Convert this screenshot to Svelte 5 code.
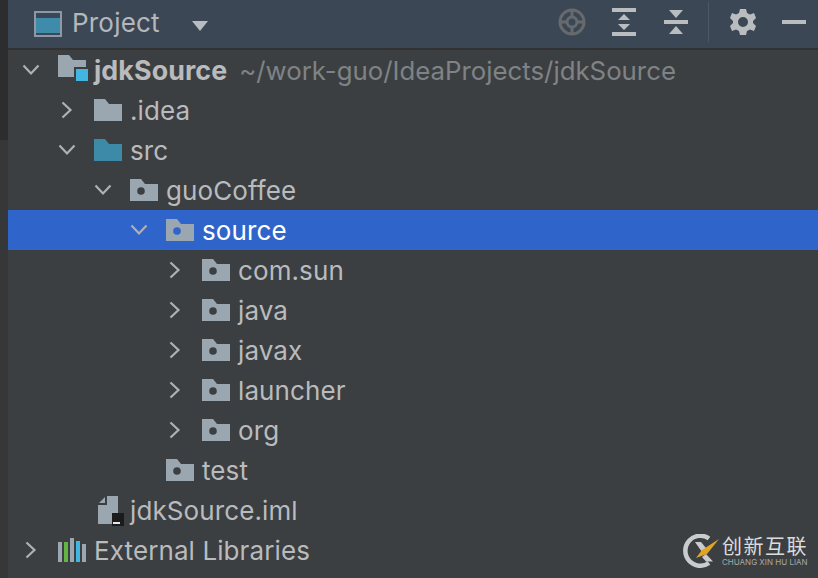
<script>
  const rows = [
    { depth: 0, arrow: 'down', icon: 'project', name: 'jdkSource', bold: true, hint: '~/work-guo/IdeaProjects/jdkSource' },
    { depth: 1, arrow: 'right', icon: 'folder', name: '.idea' },
    { depth: 1, arrow: 'down', icon: 'src', name: 'src' },
    { depth: 2, arrow: 'down', icon: 'pkg', name: 'guoCoffee' },
    { depth: 3, arrow: 'down', icon: 'pkg', name: 'source', selected: true },
    { depth: 4, arrow: 'right', icon: 'pkg', name: 'com.sun' },
    { depth: 4, arrow: 'right', icon: 'pkg', name: 'java' },
    { depth: 4, arrow: 'right', icon: 'pkg', name: 'javax' },
    { depth: 4, arrow: 'right', icon: 'pkg', name: 'launcher' },
    { depth: 4, arrow: 'right', icon: 'pkg', name: 'org' },
    { depth: 3, icon: 'pkg', name: 'test' },
    { depth: 1, icon: 'iml', name: 'jdkSource.iml' },
    { depth: 0, arrow: 'right', icon: 'libs', name: 'External Libraries' }
  ];
  const folderPath = 'M0 0H11L15 5H28V22H0Z';
</script>

<div class="window">
  <div class="gutter"></div>
  <div class="panel">
    <header class="toolbar">
      <svg class="tool-window" width="28" height="26" viewBox="0 0 28 26">
        <rect x="0" y="0" width="28" height="26" fill="#8d9aa5" />
        <rect x="2" y="2" width="24" height="22" fill="#3c4756" />
        <rect x="2" y="7" width="24" height="15" fill="#3f8bab" />
      </svg>
      <span class="title">Project</span>
      <svg class="caret" width="16" height="10" viewBox="0 0 16 10"><path d="M0 0H16L8 10Z" fill="#b6bcc2" /></svg>
      <div class="actions">
        <svg class="locate" width="28" height="28" viewBox="0 0 28 28" fill="none" stroke="#666a6c" stroke-width="3">
          <circle cx="14" cy="14" r="12" />
          <circle cx="14" cy="14" r="5" />
          <path d="M14 1V9M14 19V27M1 14H9M19 14H27" />
        </svg>
        <svg class="expand" width="24" height="28" viewBox="0 0 24 28" fill="#b9bdc0">
          <rect y="0" width="24" height="4" />
          <rect y="24" width="24" height="4" />
          <path d="M12 6L18 12H6ZM12 22L6 16H18Z" />
        </svg>
        <svg class="collapse" width="24" height="26" viewBox="0 0 24 26" fill="#b9bdc0">
          <rect y="11" width="24" height="4" />
          <path d="M5 1H19L12 9ZM12 17L19 25H5Z" />
        </svg>
        <span class="divider"></span>
        <svg class="gear" width="26" height="28" viewBox="0 0 26 28">
          <path fill="#b9bdc0" fill-rule="evenodd" d="M10 1H16L17 5L20 6.500L24 5L26 10L23 13V15L26 18L24 23L20 21.500L17 23L16 27H10L9 23L6 21.500L2 23L0 18L3 15V13L0 10L2 5L6 6.500L9 5ZM13 9A5 5 0 1 0 13 19A5 5 0 1 0 13 9Z" />
        </svg>
        <span class="minimize"></span>
      </div>
    </header>

    <div class="tree">
      {#each rows as row}
        <div class="row" class:selected={row.selected} style="padding-left: {14 + row.depth * 36}px">
          <span class="arrow" class:closed={row.arrow === 'right'}>
            {#if row.arrow === 'down'}
              <svg width="18" height="12" viewBox="0 0 18 12" fill="none" stroke="#afb1b3" stroke-width="2.200"><path d="M1.500 1.500L9 9.500L16.500 1.500" /></svg>
            {:else if row.arrow === 'right'}
              <svg width="12" height="18" viewBox="0 0 12 18" fill="none" stroke="#afb1b3" stroke-width="2.200"><path d="M1.500 1.500L9.500 9L1.500 16.500" /></svg>
            {/if}
          </span>
          <span class="icon">
            {#if row.icon === 'project'}
              <svg width="30" height="30" viewBox="0 0 30 30">
                <path d={folderPath} fill="#9aa7b0" />
                <rect x="16" y="12" width="15" height="15" fill="#3c3f41" />
                <rect x="18" y="14" width="12" height="12" fill="#40b6e0" />
              </svg>
            {:else if row.icon === 'folder' || row.icon === 'src'}
              <svg width="28" height="22" viewBox="0 0 28 22"><path d={folderPath} fill={row.icon === 'src' ? '#3d8aa8' : '#9aa7b0'} /></svg>
            {:else if row.icon === 'pkg'}
              <svg width="28" height="22" viewBox="0 0 28 22">
                <path d={folderPath} fill="#9aa7b0" />
                <circle cx="11" cy="12" r="3.800" fill={row.selected ? '#2f65ca' : '#3c3f41'} />
              </svg>
            {:else if row.icon === 'iml'}
              <svg class="iml" width="26" height="30" viewBox="0 0 26 30">
                <path d="M9 0H20V28H0V9H9Z" fill="#9aa7b0" />
                <path d="M7 1V7H1Z" fill="#9aa7b0" />
                <rect x="14" y="17" width="12" height="13" fill="#1b1b1b" />
                <rect x="15" y="26" width="7" height="2" fill="#e8e8e8" />
              </svg>
            {:else if row.icon === 'libs'}
              <svg width="28" height="24" viewBox="0 0 28 24">
                <rect x="0" y="4" width="4" height="20" fill="#9aa7b0" />
                <rect x="6" y="4" width="4" height="20" fill="#62b543" />
                <rect x="12" y="0" width="4" height="24" fill="#9aa7b0" />
                <rect x="18" y="3" width="4" height="21" fill="#40b6e0" />
                <rect x="24" y="6" width="4" height="18" fill="#9aa7b0" />
              </svg>
            {/if}
          </span>
          <span class="name" class:bold={row.bold}>{row.name}</span>
          {#if row.hint}<span class="hint">{row.hint}</span>{/if}
        </div>
      {/each}
      <div class="row" style="padding-left: 50px"><span class="next-icon"></span></div>
    </div>
  </div>

  <div class="watermark">
    <svg width="38" height="34" viewBox="0 0 38 34">
      <path d="M26 4.500A15 15 0 1 0 26 29" fill="none" stroke="#c9cbcc" stroke-width="4.500" />
      <path d="M12 8H18L23 14L19 18Z" fill="#c9cbcc" />
      <path d="M23 20L30 27.500H23L19 23Z" fill="#c9cbcc" />
      <path d="M36 5L24 20L13 24L19 16Z" fill="#e0a526" />
    </svg>
    <div class="mark-text">
      <span class="mark-cn">创新互联</span>
      <span class="mark-en">CHUANG XIN HU LIAN</span>
    </div>
  </div>
</div>

<style>
  :global(body) {
    margin: 0;
    background: #3c3f41;
  }

  .window {
    position: relative;
    display: flex;
    width: 818px;
    height: 578px;
    overflow: hidden;
    font-family: Inter, "Noto Sans", sans-serif;
  }

  .gutter {
    width: 8px;
    flex-shrink: 0;
    background: linear-gradient(to bottom, #2c2d2e 0, #2c2d2e 140px, #353738 140px);
  }

  .panel {
    flex: 1;
    min-width: 0;
    display: flex;
    flex-direction: column;
    background: #3c3f41;
  }

  .toolbar {
    display: flex;
    align-items: center;
    height: 48px;
    flex-shrink: 0;
    padding-left: 26px;
    background: #3c4756;
    border-bottom: 2px solid #323232;
  }

  .tool-window {
    margin-right: 10px;
  }

  .title {
    font-size: 26px;
    letter-spacing: 0.2px;
    line-height: 44px;
    margin-bottom: 2px;
    color: #b4b8bc;
  }

  .caret {
    margin-left: 32px;
    margin-top: 3px;
  }

  .actions {
    display: flex;
    align-items: center;
    margin-left: auto;
    padding-right: 12px;
    padding-bottom: 4px;
  }

  .expand {
    margin-left: 26px;
  }

  .collapse {
    margin-left: 28px;
  }

  .divider {
    width: 1px;
    height: 40px;
    margin-left: 20px;
    background: #4d5765;
  }

  .gear {
    margin-left: 21px;
  }

  .minimize {
    width: 24px;
    height: 4px;
    margin-left: 26px;
    background: #b9bdc0;
  }

  .tree {
    display: flex;
    flex-direction: column;
  }

  .row {
    display: flex;
    align-items: center;
    height: 40px;
    flex-shrink: 0;
    white-space: nowrap;
    font-size: 26px;
    letter-spacing: 0.1px;
    color: #b9bbbd;
  }

  .row.selected {
    background: #2f65ca;
  }

  .row.selected .name {
    color: #fff;
  }

  .arrow {
    width: 36px;
    flex-shrink: 0;
    display: flex;
    align-items: center;
  }

  .arrow.closed {
    padding-left: 3px;
    width: 33px;
  }

  .icon {
    width: 36px;
    flex-shrink: 0;
    display: flex;
    align-items: center;
  }

  .iml {
    margin-left: 4px;
    margin-top: 2px;
  }

  .bold {
    font-size: 26.800px;
    font-weight: 700;
  }

  .hint {
    margin-left: 12px;
    font-size: 25.800px;
    letter-spacing: 0;
    color: #7f8386;
  }

  .next-icon {
    width: 20px;
    height: 16px;
    margin-top: 32px;
    background: #9aa7b0;
  }

  .watermark {
    position: absolute;
    right: 10px;
    bottom: 10px;
    display: flex;
    align-items: center;
    gap: 1px;
  }

  .mark-text {
    display: flex;
    flex-direction: column;
    line-height: 1;
  }

  .mark-cn {
    font-family: "Noto Sans CJK SC", sans-serif;
    font-size: 20px;
    line-height: 20px;
    letter-spacing: 1.500px;
    color: #dcdcdc;
  }

  .mark-en {
    font-size: 8px;
    line-height: 8px;
    color: #a8a8a8;
    margin-top: 2px;
  }
</style>
